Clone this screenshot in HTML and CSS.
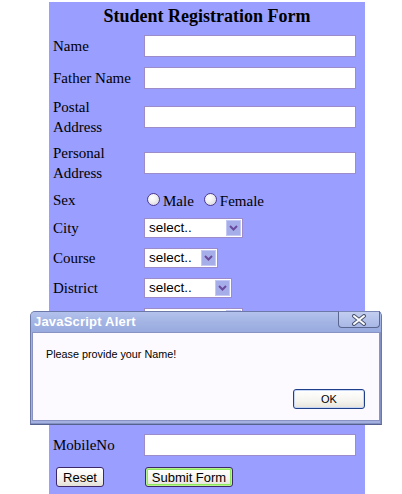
FILE: index.html
```html
<!DOCTYPE html>
<html>
<head>
<meta charset="utf-8">
<title>Student Registration Form</title>
<link rel="stylesheet" href="styles.css">
</head>
<body>
<form class="panel">
  <h1 class="title">Student Registration Form</h1>
  <div class="row h32"><span class="lbl">Name</span><input class="txt" type="text"></div>
  <div class="row h32"><span class="lbl">Father Name</span><input class="txt" type="text"></div>
  <div class="row h46"><span class="lbl">Postal<br>Address</span><input class="txt" type="text"></div>
  <div class="row h46"><span class="lbl">Personal<br>Address</span><input class="txt" type="text"></div>
  <div class="row h27"><span class="lbl">Sex</span>
    <div class="radios">
      <span class="radio"></span><span class="rtext">Male</span>
      <span class="radio second"></span><span class="rtext">Female</span>
    </div>
  </div>
  <div class="row h30"><span class="lbl">City</span>
    <div class="sel w99"><span class="val">select..</span><span class="arrow"><svg width="9" height="6" viewBox="0 0 9 6"><path d="M1 1 L4.5 4.5 L8 1" fill="none" stroke="#6a4a9c" stroke-width="2"/></svg></span></div>
  </div>
  <div class="row h30"><span class="lbl">Course</span>
    <div class="sel w74"><span class="val">select..</span><span class="arrow"><svg width="9" height="6" viewBox="0 0 9 6"><path d="M1 1 L4.5 4.5 L8 1" fill="none" stroke="#6a4a9c" stroke-width="2"/></svg></span></div>
  </div>
  <div class="row h30"><span class="lbl">District</span>
    <div class="sel w88"><span class="val">select..</span><span class="arrow"><svg width="9" height="6" viewBox="0 0 9 6"><path d="M1 1 L4.5 4.5 L8 1" fill="none" stroke="#6a4a9c" stroke-width="2"/></svg></span></div>
  </div>
  <!-- rows hidden behind the alert dialog -->
  <div class="row h30"><span class="lbl"></span>
    <div class="sel w99"><span class="val"></span><span class="arrow"></span></div>
  </div>
  <div class="row h32"><span class="lbl"></span><input class="txt" type="text"></div>
  <div class="row h32"><span class="lbl"></span><input class="txt" type="text"></div>
  <div class="row h32"><span class="lbl"></span><input class="txt" type="text"></div>
  <div class="row h32"><span class="lbl">MobileNo</span><input class="txt" type="text"></div>
  <div class="row h32">
    <span class="cell"><button type="button" class="btn reset">Reset</button></span>
    <span class="cell"><button type="button" class="btn submit">Submit Form</button></span>
  </div>
</form>

<div class="alert">
  <div class="titlebar">
    <span class="atitle">JavaScript Alert</span>
    <span class="close"><svg width="16" height="12" viewBox="0 0 16 12"><path d="M3 2 L13 10 M13 2 L3 10" stroke="#4a5570" stroke-width="4" stroke-linecap="round"/><path d="M3 2 L13 10 M13 2 L3 10" stroke="#ffffff" stroke-width="2" stroke-linecap="round"/></svg></span>
  </div>
  <div class="abody">
    <p class="msg">Please provide your Name!</p>
    <button type="button" class="okbtn">OK</button>
  </div>
</div>
</body>
</html>
```

FILE: styles.css
```css
html, body {
  margin: 0;
  padding: 0;
  background: #ffffff;
}
body {
  width: 402px;
  height: 494px;
  overflow: hidden;
  position: relative;
  font-family: "Liberation Serif", "Times New Roman", serif;
  color: #000;
}
.panel {
  margin: 2px 0 0 49px;
  width: 316px;
  height: 492px;
  background: #999eff;
  box-sizing: border-box;
  padding: 0 9px 0 4px;
  display: flex;
  flex-direction: column;
}
.title {
  margin: 0 -9px 0 -4px;
  height: 28px;
  line-height: 28px;
  font-size: 18px;
  font-weight: bold;
  text-align: center;
}
.row {
  display: grid;
  grid-template-columns: 91px 212px;
  align-items: center;
}
.h27 { height: 27px; }
.h30 { height: 30px; }
.h32 { height: 32px; }
.h46 { height: 46px; }
.lbl {
  font-size: 15px;
  line-height: 20px;
}
.txt {
  width: 212px;
  height: 22px;
  margin: 0;
  box-sizing: border-box;
  border: 1px solid #9c8cca;
  background: #ffffff;
  padding: 0 3px;
}
.radios {
  display: flex;
  align-items: center;
  padding-left: 3px;
  font-size: 15px;
}
.radio {
  width: 13px;
  height: 13px;
  box-sizing: border-box;
  border-radius: 50%;
  border: 1px solid #4c3a90;
  background: radial-gradient(circle at 40% 35%, #ffffff 0%, #f2f2f2 40%, #cfcfd8 100%);
  margin-right: 3px;
}
.radio.second {
  margin-left: 10px;
}
.rtext {
  line-height: 20px;
  position: relative;
  top: 1px;
}
.sel {
  display: flex;
  height: 20px;
  box-sizing: border-box;
  border: 1px solid #9c8cca;
  background: #ffffff;
  font-family: "Liberation Sans", Arial, sans-serif;
  font-size: 13.5px;
}
.w99 { width: 99px; }
.w74 { width: 74px; }
.w88 { width: 88px; }
.val {
  flex: 1;
  padding-left: 4px;
  line-height: 18px;
  overflow: hidden;
  white-space: nowrap;
}
.arrow {
  width: 15px;
  margin: 1px 1px 1px 0;
  box-sizing: border-box;
  background: #a6aeea;
  border: 1px solid #c3c8f5;
  display: flex;
  align-items: center;
  justify-content: center;
}
.cell {
  display: flex;
  align-items: center;
}
.btn {
  height: 20px;
  margin: 0;
  padding: 0;
  box-sizing: border-box;
  font-family: "Liberation Sans", Arial, sans-serif;
  font-size: 13px;
  color: #000;
  border: 1px solid #3c2868;
  border-radius: 3px;
  background: linear-gradient(#ffffff, #f4f3ee 60%, #e3e0d6);
}
.reset {
  width: 48px;
  margin-left: 3px;
}
.submit {
  width: 88px;
  margin-left: 1px;
  box-shadow: inset 0 0 0 1px #b6f58e, inset 0 0 0 2px #8ee85c;
}
.alert {
  position: absolute;
  left: 30px;
  top: 311px;
  width: 352px;
  height: 114px;
  box-sizing: border-box;
  border: 1px solid #6b78a8;
  border-bottom-color: #56618e;
  border-radius: 5px 5px 0 0;
  background: #a4b1e0;
  display: flex;
  flex-direction: column;
  box-shadow: inset -1px -1px 0 #8290c2;
}
.titlebar {
  height: 20px;
  display: flex;
  align-items: flex-start;
  background: linear-gradient(#b3c2ec, #a3b4e4 50%, #98aadf);
  border-radius: 4px 4px 0 0;
}
.atitle {
  font-family: "Liberation Sans", Arial, sans-serif;
  font-weight: bold;
  font-size: 13px;
  color: #ffffff;
  line-height: 20px;
  padding-left: 3px;
  letter-spacing: 0.2px;
  flex: 1;
}
.close {
  width: 42px;
  height: 17px;
  margin: -1px 1px 0 0;
  box-sizing: border-box;
  border: 1px solid #5b668f;
  border-top-color: #7a86b6;
  border-radius: 0 0 4px 4px;
  background: linear-gradient(#c2cdf0, #a8b7e5);
  display: flex;
  align-items: center;
  justify-content: center;
}
.abody {
  flex: 1;
  margin: 0 1px 3px 1px;
  background: #fcfaff;
  border: 1px solid #8893c3;
  display: flex;
  flex-direction: column;
  justify-content: space-between;
}
.msg {
  margin: 0;
  padding: 14px 0 0 13px;
  font-family: "Liberation Sans", Tahoma, sans-serif;
  font-size: 10.8px;
  line-height: 14px;
}
.okbtn {
  align-self: flex-end;
  width: 72px;
  height: 20px;
  margin: 0 14px 11px 0;
  padding: 0;
  box-sizing: border-box;
  border: 1px solid #1f3f8a;
  border-radius: 3px;
  background: linear-gradient(#ffffff, #f5f4ef 60%, #e6e3da);
  box-shadow: inset 0 0 0 1px #c6d6f4;
  font-family: "Liberation Sans", Tahoma, sans-serif;
  font-size: 11px;
  color: #000;
}
```
